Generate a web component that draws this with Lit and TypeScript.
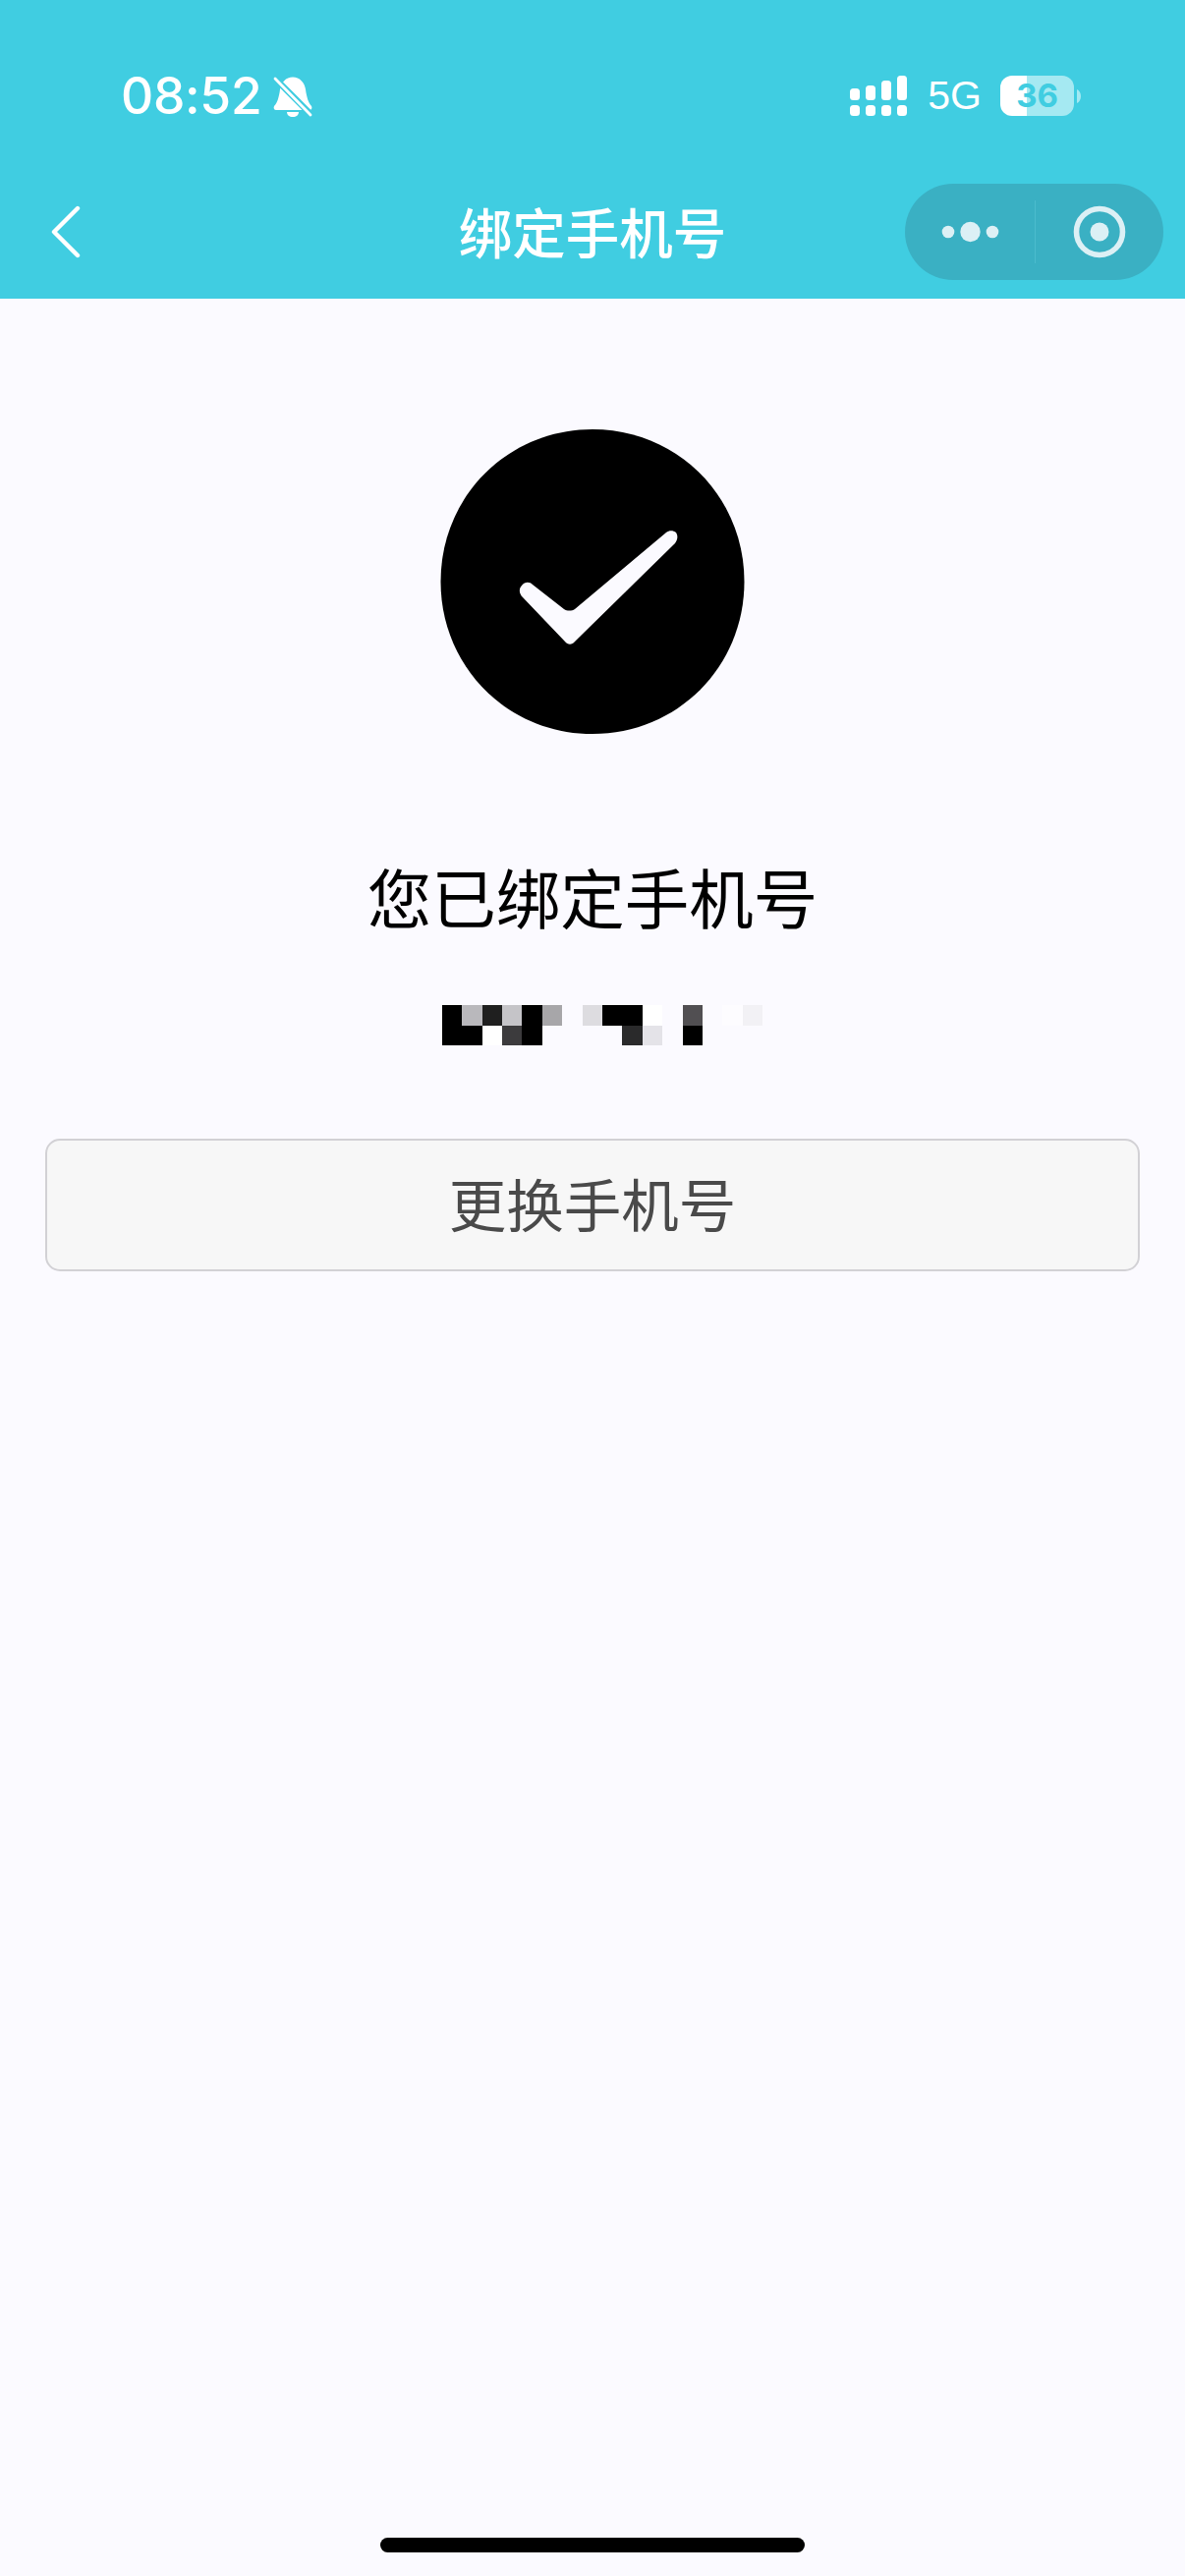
import { LitElement, html, css } from "lit";
import { customElement } from "lit/decorators.js";

const B = "";
const rows: string[][] = [
  ["#000", "#b9b8bc", "#1f1f1f", "#c5c4c8", "#000", "#a7a6a9", B, "#dddce0", "#000", "#000", "#fff", B, "#514f52", B, "#fdfcff", "#f2f1f5"],
  ["#000", "#000", "#fff", "#3c3b3d", "#000", B, B, B, B, "#2a2a2b", "#e4e3e8", B, "#000", B, B, B],
];

@customElement("app-root")
export class AppRoot extends LitElement {
  static styles = css`
    :host {
      display: flex;
      flex-direction: column;
      width: 1206px;
      height: 2622px;
      overflow: hidden;
      background: #fbfaff;
      font-family: "Noto Sans CJK SC", "Inter", sans-serif;
    }
    .header {
      background: #40cde1;
      height: 304px;
      box-sizing: border-box;
      padding-top: 77px;
      color: #fff;
      display: flex;
      flex-direction: column;
      flex: none;
    }
    .status {
      height: 41px;
      display: flex;
      justify-content: space-between;
      align-items: center;
      padding: 0 106px 0 123px;
    }
    .status-left, .status-right { display: flex; align-items: center; }
    .time {
      font-family: "Inter", sans-serif;
      font-weight: 500;
      font-size: 51.5px;
      line-height: 41px;
      letter-spacing: -0.3px;
    }
    .bell { margin-left: 12px; display: block; }
    .signal { display: block; transform: translateX(-2px); }
    .net {
      font-family: "Liberation Sans", sans-serif;
      font-size: 41px;
      line-height: 41px;
      margin-left: 19px;
    }
    .battery {
      width: 75px;
      height: 41px;
      margin-left: 19px;
      border-radius: 12px;
      background: linear-gradient(to right, #fff 0 27px, #a5e9f2 27px 100%);
      color: #40cde1;
      font-family: "Inter", sans-serif;
      font-weight: 700;
      font-size: 33px;
      line-height: 41px;
      text-align: center;
    }
    .nub { margin-left: 3px; display: block; }
    .nav {
      margin-top: 69px;
      height: 98px;
      display: grid;
      grid-template-columns: 1fr auto 1fr;
      align-items: center;
      padding: 0 22px 0 52px;
    }
    .back { display: block; }
    .title {
      font-size: 54.5px;
      font-weight: 500;
      line-height: 98px;
      text-align: center;
      white-space: nowrap;
      transform: translate(-15px, -1px);
    }
    .capsule {
      justify-self: end;
      width: 263px;
      height: 98px;
      border-radius: 49px;
      background: #3ab0c3;
      display: block;
    }
    .main {
      flex: 1;
      display: flex;
      flex-direction: column;
      align-items: center;
      padding: 133px 0 0;
      min-height: 0;
    }
    .badge { display: block; width: 310px; height: 310px; }
    .heading {
      margin-top: 127px;
      font-size: 65.5px;
      line-height: 76px;
      color: #000;
      white-space: nowrap;
    }
    .mosaic {
      margin-top: 73px;
      display: grid;
      grid-template-columns: repeat(16, 20.4px);
      grid-auto-rows: 20.5px;
      transform: translateX(10px);
    }
    .button {
      margin-top: 95px;
      width: 1114px;
      height: 135px;
      box-sizing: border-box;
      border: 2px solid #d2d1d5;
      border-radius: 15px;
      background: #f7f7f7;
      color: #4a4a4a;
      font-size: 58.5px;
      padding-bottom: 7px;
      display: flex;
      align-items: center;
      justify-content: center;
    }
    .spacer { flex: 1; }
    .home {
      width: 432px;
      height: 15px;
      border-radius: 8px;
      background: #000;
      margin-bottom: 24px;
    }
  `;

  render() {
    return html`
      <div class="header">
        <div class="status">
          <div class="status-left">
            <span class="time">08:52</span>
            <svg class="bell" width="40" height="42" viewBox="0 0 40 42">
              <path fill="#fff" d="M20 1.500C27 1.500 32 7 33 14C34 22 36 28 39 31C40 33 39 35 37 35H3C1 35 0 33 1 31C4 28 6 22 7 14C8 7 13 1.500 20 1.500Z" />
              <path fill="#fff" d="M14 37H26C26 40 23.500 42 20 42S14 40 14 37Z" />
              <path stroke="#40cde1" stroke-width="6.500" d="M0 1L40 41" />
              <path stroke="#fff" stroke-width="2.800" stroke-linecap="round" d="M2 3L38 40" />
            </svg>
          </div>
          <div class="status-right">
            <svg class="signal" width="58" height="41" viewBox="0 0 58 41" fill="#fff">
              <rect x="0" y="13" width="10" height="12" rx="3.500" />
              <rect x="16" y="10" width="10" height="15" rx="3.500" />
              <rect x="32" y="5" width="10" height="20" rx="3.500" />
              <rect x="48" y="0" width="10" height="25" rx="3.500" />
              <rect x="0" y="30" width="10" height="11" rx="3.500" />
              <rect x="16" y="30" width="10" height="11" rx="3.500" />
              <rect x="32" y="30" width="10" height="11" rx="3.500" />
              <rect x="48" y="30" width="10" height="11" rx="3.500" />
            </svg>
            <span class="net">5G</span>
            <div class="battery">36</div>
            <svg class="nub" width="4" height="14" viewBox="0 0 4 14">
              <path fill="#a5e9f2" d="M0 0C2.500 1 4 4 4 7S2.500 13 0 14Z" />
            </svg>
          </div>
        </div>
        <div class="nav">
          <svg class="back" width="32" height="56" viewBox="0 0 32 56">
            <path d="M27 4L3 28L27 52" fill="none" stroke="#fff" stroke-width="4.400" stroke-linecap="round" stroke-linejoin="round" />
          </svg>
          <div class="title">绑定手机号</div>
          <svg class="capsule" viewBox="0 0 263 98">
            <rect x="132" y="17" width="1" height="64" fill="#4bbccd" />
            <g fill="#dcf0f5">
              <circle cx="44" cy="49" r="6.300" />
              <circle cx="66.500" cy="49" r="10.200" />
              <circle cx="89" cy="49" r="6.300" />
              <circle cx="198" cy="49" r="9.500" />
            </g>
            <circle cx="198" cy="49" r="23.500" fill="none" stroke="#dcf0f5" stroke-width="5.600" />
          </svg>
        </div>
      </div>
      <div class="main">
        <svg class="badge" viewBox="448 437 310 310">
          <path fill="#000" d="M603 437C689 437 757.500 505 757.500 592S689 747 603 747S448.500 679 448.500 592S517 437 603 437Z" />
          <path fill="#fbfaff" d="M678 542C681 539.500 685 539.500 688 542C690 545 690 549 687 553L585 653C582 656.500 578 656.500 575 653L532 608C528 604 528 599 531 596C534 592 539 592 542 595L574 620C577 622 582 622 585 620Z" />
        </svg>
        <div class="heading">您已绑定手机号</div>
        <div class="mosaic">
          ${rows.map((r) => r.map((c) => html`<div style="background:${c || "transparent"}"></div>`))}
        </div>
        <div class="button">更换手机号</div>
        <div class="spacer"></div>
        <div class="home"></div>
      </div>
    `;
  }
}
